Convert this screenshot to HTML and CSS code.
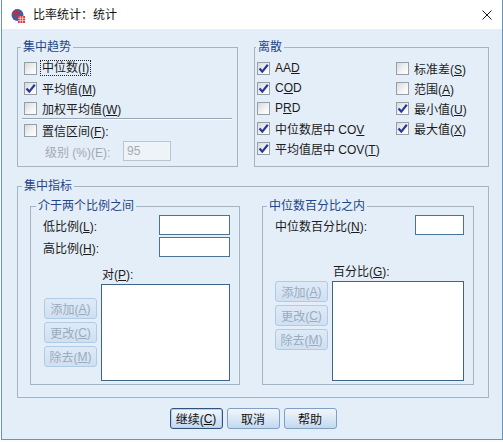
FILE: index.html
```html
<!DOCTYPE html>
<html lang="zh-CN">
<head>
<meta charset="utf-8">
<title>比率统计：统计</title>
<link rel="stylesheet" href="styles.css">
</head>
<body>
<div class="window">
  <div class="titlebar">
    <svg class="app-icon" viewBox="0 0 14 15" width="14" height="15">
      <circle cx="6.5" cy="7" r="6" fill="#3b5f9f"/>
      <path d="M5 1.5v8M1.8 4.8h6.6" stroke="#d9262e" stroke-width="2"/>
      <rect x="7" y="8" width="7" height="7" fill="#e2343b"/>
      <path d="M7 10.3h7M7 12.6h7M9.3 8v7M11.6 8v7" stroke="#ffffff" stroke-width="0.6"/>
    </svg>
    <span class="title">比率统计：统计</span>
    <svg class="close" viewBox="0 0 10 10" width="10" height="10">
      <path d="M0.5 0.5L9.5 9.5M9.5 0.5L0.5 9.5" stroke="#1a1a1a" stroke-width="1"/>
    </svg>
  </div>
  <div class="body">
    <div class="top-row">
      <fieldset class="group central">
        <legend>集中趋势</legend>
        <div class="check"><span class="box"></span><span class="focus">中位数(<u>I</u>)</span></div>
        <div class="check"><span class="box on"><svg viewBox="0 0 11 11"><path d="M1.5 5.5L4.3 8.6L9.8 1.8" fill="none" stroke="#27379a" stroke-width="2.2"/></svg></span><span>平均值(<u>M</u>)</span></div>
        <div class="check"><span class="box"></span><span>加权平均值(<u>W</u>)</span></div>
        <div class="sep"></div>
        <div class="check"><span class="box"></span><span>置信区间(<u>F</u>):</span></div>
        <div class="level"><span class="level-label">级别 (%)(E):</span><span class="input disabled">95</span></div>
      </fieldset>
      <fieldset class="group dispersion">
        <legend>离散</legend>
        <div class="check-grid">
          <div class="check"><span class="box on"><svg viewBox="0 0 11 11"><path d="M1.5 5.5L4.3 8.6L9.8 1.8" fill="none" stroke="#27379a" stroke-width="2.2"/></svg></span><span>AA<u>D</u></span></div>
          <div class="check"><span class="box"></span><span>标准差(<u>S</u>)</span></div>
          <div class="check"><span class="box on"><svg viewBox="0 0 11 11"><path d="M1.5 5.5L4.3 8.6L9.8 1.8" fill="none" stroke="#27379a" stroke-width="2.2"/></svg></span><span>C<u>O</u>D</span></div>
          <div class="check"><span class="box"></span><span>范围(<u>A</u>)</span></div>
          <div class="check"><span class="box"></span><span>P<u>R</u>D</span></div>
          <div class="check"><span class="box on"><svg viewBox="0 0 11 11"><path d="M1.5 5.5L4.3 8.6L9.8 1.8" fill="none" stroke="#27379a" stroke-width="2.2"/></svg></span><span>最小值(<u>U</u>)</span></div>
          <div class="check"><span class="box on"><svg viewBox="0 0 11 11"><path d="M1.5 5.5L4.3 8.6L9.8 1.8" fill="none" stroke="#27379a" stroke-width="2.2"/></svg></span><span>中位数居中 CO<u>V</u></span></div>
          <div class="check"><span class="box on"><svg viewBox="0 0 11 11"><path d="M1.5 5.5L4.3 8.6L9.8 1.8" fill="none" stroke="#27379a" stroke-width="2.2"/></svg></span><span>最大值(<u>X</u>)</span></div>
          <div class="check"><span class="box on"><svg viewBox="0 0 11 11"><path d="M1.5 5.5L4.3 8.6L9.8 1.8" fill="none" stroke="#27379a" stroke-width="2.2"/></svg></span><span>平均值居中 COV(<u>T</u>)</span></div>
        </div>
      </fieldset>
    </div>
    <fieldset class="group index">
      <legend>集中指标</legend>
      <div class="index-row">
        <fieldset class="sub between">
          <legend>介于两个比例之间</legend>
          <div class="field-row"><span>低比例(<u>L</u>):</span><span class="input wide"></span></div>
          <div class="field-row second"><span>高比例(<u>H</u>):</span><span class="input wide"></span></div>
          <div class="pair">
            <div class="pair-label">对(<u>P</u>):</div>
            <div class="btn-stack">
              <div class="btn disabled">添加(<u>A</u>)</div>
              <div class="btn disabled">更改(<u>C</u>)</div>
              <div class="btn disabled">除去(<u>M</u>)</div>
            </div>
            <div class="list"></div>
          </div>
        </fieldset>
        <fieldset class="sub within">
          <legend>中位数百分比之内</legend>
          <div class="field-row"><span>中位数百分比(<u>N</u>):</span><span class="input narrow"></span></div>
          <div class="pair">
            <div class="pair-label">百分比(<u>G</u>):</div>
            <div class="btn-stack">
              <div class="btn disabled">添加(<u>A</u>)</div>
              <div class="btn disabled">更改(<u>C</u>)</div>
              <div class="btn disabled">除去(<u>M</u>)</div>
            </div>
            <div class="list"></div>
          </div>
        </fieldset>
      </div>
    </fieldset>
    <div class="actions">
      <div class="btn default">继续(<u>C</u>)</div>
      <div class="btn">取消</div>
      <div class="btn">帮助</div>
    </div>
  </div>
</div>
</body>
</html>
```
FILE: styles.css
```css
* { box-sizing: border-box; }
html, body { margin: 0; padding: 0; }
body {
  width: 503px;
  height: 442px;
  overflow: hidden;
  background: #fbfcfd;
  font-family: "Liberation Sans", "Noto Sans CJK SC", sans-serif;
  font-size: 12px;
  color: #1b1b1b;
}
u { text-underline-offset: 1px; }

.window {
  margin-left: 1px;
  width: 502px;
  height: 440px;
  border: 1px solid #6c93b6;
  border-top: none;
  background: #e4eef9;
  display: flex;
  flex-direction: column;
}
.titlebar {
  height: 29px;
  flex: none;
  background: #ffffff;
  display: flex;
  align-items: center;
  padding: 1px 10px 0 9px;
}
.app-icon { flex: none; margin-right: 8px; }
.title { flex: 1; line-height: 16px; color: #111; }
.close { flex: none; }

.body {
  flex: 1;
  padding: 10px 13px 10px 15px;
  display: flex;
  flex-direction: column;
}

fieldset { margin: 0; min-width: 0; border: 1px solid #a3b4c4; }
legend {
  padding: 0 2px;
  line-height: 16px;
  color: #1f4685;
}

.top-row {
  display: grid;
  grid-template-columns: 221px 235px;
  column-gap: 16px;
}
.group.central { padding: 3px 5px 5px 6px; }
.group.central legend { margin-left: -3px; }
.group.dispersion { padding: 3px 4px 5px 2px; }
.group.dispersion legend { margin-left: -1px; }

.check {
  display: flex;
  align-items: center;
  height: 20px;
  white-space: nowrap;
}
.box {
  flex: none;
  width: 13px;
  height: 13px;
  margin-right: 5px;
  border: 1px solid #979ea6;
  background: linear-gradient(135deg, #d6d9dd, #f4f5f6 60%, #ffffff);
  display: flex;
  align-items: center;
  justify-content: center;
}
.box svg { width: 11px; height: 11px; overflow: visible; }
.focus {
  margin-left: -2px;
  padding: 0 1px;
  border: 1px dotted #222;
  line-height: 14px;
}
.sep {
  height: 2px;
  margin-left: -2px;
  border-top: 1px solid #97a7b6;
  border-bottom: 1px solid #f7fbff;
}
.level {
  display: flex;
  align-items: center;
  height: 20px;
  margin-top: 1px;
}
.level-label {
  width: 99px;
  padding-left: 21px;
  color: #a2a9b0;
  white-space: nowrap;
}
.input {
  height: 20px;
  background: #ffffff;
  border: 1px solid #4a7394;
}
.input.disabled {
  width: 48px;
  background: #eef3f8;
  border-color: #b9c6d1;
  color: #a3abb3;
  line-height: 18px;
  padding-left: 3px;
}
.input.wide { width: 71px; }
.input.narrow { width: 49px; }

.check-grid {
  display: grid;
  grid-template-columns: 139px auto;
}

.group.index {
  margin-top: 11px;
  padding: 4px 14px 12px 12px;
}
.group.index > legend { margin-left: -8px; }
.index-row {
  display: grid;
  grid-template-columns: 210px 212px;
  column-gap: 22px;
}
.sub { padding: 1px 9px 3px 12px; }
.sub.between legend { margin-left: -7px; }
.sub.within legend { margin-left: -8px; }

.field-row {
  display: flex;
  justify-content: space-between;
  align-items: center;
  height: 20px;
  white-space: nowrap;
}
.field-row.second { margin-top: 2px; }

.pair {
  display: grid;
  align-items: start;
}
.between .pair {
  grid-template-columns: 54px 129px;
  column-gap: 4px;
  margin-top: 10px;
}
.within .pair {
  grid-template-columns: 54px 132px;
  column-gap: 3px;
  margin-top: 29px;
}
.pair-label {
  grid-column: 2;
  line-height: 16px;
  margin-bottom: 1px;
  padding-left: 1px;
}
.btn-stack {
  grid-column: 1;
  display: flex;
  flex-direction: column;
  gap: 3px;
}
.between .btn-stack { padding: 14px 0 0 1px; }
.list {
  grid-column: 2;
  background: #ffffff;
  border: 1px solid #3f6487;
}
.between .list { height: 97px; }
.within .list { height: 100px; }

.btn {
  width: 53px;
  height: 21px;
  border: 1px solid #7f9fc4;
  border-radius: 3px;
  background: linear-gradient(#f1f6fc, #dbe8f6 50%, #c3d8ef);
  display: flex;
  align-items: center;
  justify-content: center;
  white-space: nowrap;
  color: #111;
}
.btn.disabled {
  color: #9aabbd;
  border-color: #b2cbe3;
  background: linear-gradient(#dfeaf6, #cfe0f2);
}
.btn.default {
  border-color: #30527c;
  box-shadow: inset 0 0 0 1px #b7d0ec;
}

.actions {
  margin-top: 10px;
  display: flex;
  justify-content: center;
  gap: 4px;
}
```
